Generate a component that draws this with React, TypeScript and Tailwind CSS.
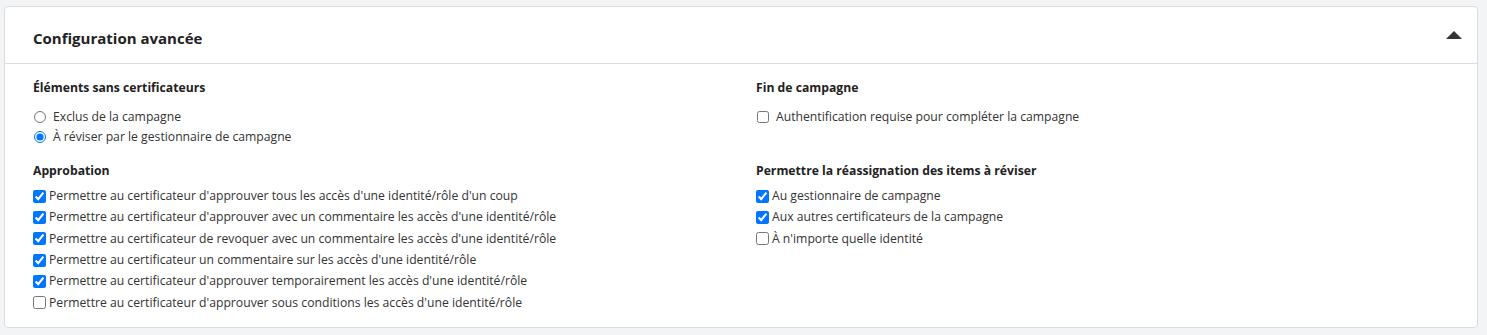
const approvals = [
  { label: "Permettre au certificateur d'approuver tous les accès d'une identité/rôle d'un coup", checked: true },
  { label: "Permettre au certificateur d'approuver avec un commentaire les accès d'une identité/rôle", checked: true },
  { label: "Permettre au certificateur de revoquer avec un commentaire les accès d'une identité/rôle", checked: true },
  { label: "Permettre au certificateur un commentaire sur les accès d'une identité/rôle", checked: true },
  { label: "Permettre au certificateur d'approuver temporairement les accès d'une identité/rôle", checked: true },
  { label: "Permettre au certificateur d'approuver sous conditions les accès d'une identité/rôle", checked: false },
];

const reassign = [
  { label: "Au gestionnaire de campagne", checked: true },
  { label: "Aux autres certificateurs de la campagne", checked: true },
  { label: "À n'importe quelle identité", checked: false },
];

function Check({ label, checked }: { label: string; checked: boolean }) {
  return (
    <label className="flex items-center h-[21.3px]">
      <input type="checkbox" defaultChecked={checked} className="m-0 mr-[3px] w-[13px] h-[13px]" />
      <span>{label}</span>
    </label>
  );
}

export default function App() {
  return (
    <div className="min-h-screen bg-[#f3f4f6] pt-[6px] pl-[4px] pr-[9px] text-[12.2px] text-[#333]" style={{ fontFamily: '"Segoe UI", "Open Sans", sans-serif' }}>
      <div className="bg-white border border-[#dcdcdc] rounded-[4px] h-[322px]">
        {/* header */}
        <div className="h-[57px] border-b border-[#dcdcdc] flex items-center justify-between pl-[28px] pr-[15px] pt-[7px]">
          <h2 className="text-[15px] font-bold text-[#222]">Configuration avancée</h2>
          <svg width="16" height="8" viewBox="0 0 16 8" className="mb-[8px]">
            <polygon points="8,0 16,8 0,8" fill="#333" />
          </svg>
        </div>
        {/* body */}
        <div className="grid grid-cols-2 gap-x-[30px] px-[28px] pt-[15px]">
          <div>
            <h3 className="font-bold text-[#222] mb-[10px]">Éléments sans certificateurs</h3>
            <label className="flex items-center h-[20px]">
              <input type="radio" name="nocert" className="m-0 ml-[1px] mr-[7px] w-[12px] h-[12px]" />
              <span>Exclus de la campagne</span>
            </label>
            <label className="flex items-center h-[20px]">
              <input type="radio" name="nocert" defaultChecked className="m-0 ml-[1px] mr-[7px] w-[12px] h-[12px]" />
              <span>À réviser par le gestionnaire de campagne</span>
            </label>
            <h3 className="font-bold text-[#222] mt-[15px] mb-[5px]">Approbation</h3>
            {approvals.map((a) => (
              <Check key={a.label} {...a} />
            ))}
          </div>
          <div>
            <h3 className="font-bold text-[#222] mb-[10px]">Fin de campagne</h3>
            <label className="flex items-center h-[20px]">
              <input type="checkbox" className="m-0 ml-[1px] mr-[7px] w-[12px] h-[12px]" />
              <span>Authentification requise pour compléter la campagne</span>
            </label>
            <div className="h-[20px]" />
            <h3 className="font-bold text-[#222] mt-[15px] mb-[5px]">Permettre la réassignation des items à réviser</h3>
            {reassign.map((a) => (
              <Check key={a.label} {...a} />
            ))}
          </div>
        </div>
      </div>
    </div>
  );
}
